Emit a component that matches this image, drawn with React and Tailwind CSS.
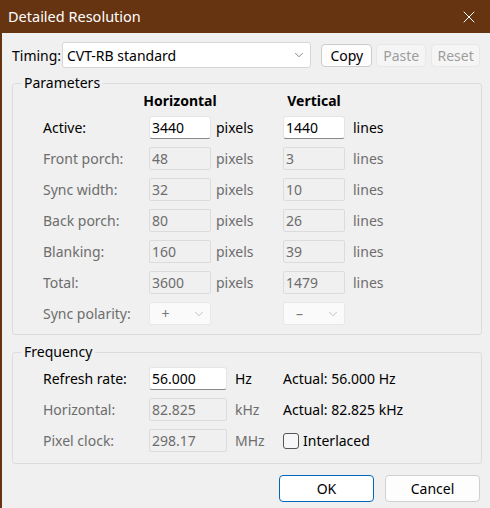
import { X, ChevronDown } from "lucide-react";

const font = { fontFamily: '"Noto Sans", "Open Sans", sans-serif' };

const Field = ({ value, enabled, w = "w-[62px]" }) => (
  <div
    className={`${w} h-[23px] flex items-center px-[2px] text-[14px] ${
      enabled
        ? "bg-white text-black border border-[#e5e5e5] border-b-[#8a8a8a] rounded-[3px]"
        : "bg-[#f0f0f0] text-[#6d6d6d] border border-[#dcdcdc] rounded-[2px]"
    }`}
  >
    {value}
  </div>
);

const ParamRow = ({ label, h, v, enabled }) => (
  <div className="flex items-center h-[31px]">
    <div className={`w-[106px] ${enabled ? "text-black" : "text-[#6d6d6d]"}`}>{label}</div>
    <Field value={h} enabled={enabled} />
    <div className={`w-[72px] pl-[5px] ${enabled ? "text-black" : "text-[#6d6d6d]"}`}>pixels</div>
    <Field value={v} enabled={enabled} />
    <div className={`pl-[8px] ${enabled ? "text-black" : "text-[#6d6d6d]"}`}>lines</div>
  </div>
);

const Polarity = ({ sign }) => (
  <div className="w-[62px] h-[23px] bg-[#fafafa] border border-[#e8e8e8] rounded-[2px] flex items-center justify-between pl-[8px] pr-[4px] text-[#777]">
    <span className="w-[15px] text-center">{sign}</span>
    <ChevronDown size={14} strokeWidth={1} className="text-[#999]" />
  </div>
);

export default function App() {
  return (
    <div style={font} className="w-[490px] h-[508px] bg-[#f0f0f0] border-l-2 border-[#673411] text-[14px] text-black flex flex-col overflow-hidden">
      <div className="h-[33px] bg-[#673411] text-white flex items-center justify-between pl-[6px] pr-[11px] shrink-0">
        <span className="text-[14.5px]">Detailed Resolution</span>
        <X size={20} strokeWidth={1.2} />
      </div>

      <div className="px-[10px]">
        <div className="flex items-center mt-[9px] h-[26px]">
          <span className="w-[50px]">Timing:</span>
          <div className="w-[250px] h-[26px] bg-white border border-[#d6d6d6] rounded-[3px] flex items-center justify-between pl-[4px] pr-[4px]">
            <span>CVT-RB standard</span>
            <ChevronDown size={14} strokeWidth={1.2} className="text-[#555]" />
          </div>
          <div className="ml-[10px] w-[51px] h-[23px] bg-[#fdfdfd] border border-[#cccccc] rounded-[4px] flex items-center justify-center">Copy</div>
          <div className="ml-[4px] w-[50px] h-[23px] bg-[#f5f5f5] border border-[#e8e8e8] rounded-[4px] flex items-center justify-center text-[#9d9d9d]">Paste</div>
          <div className="ml-[5px] w-[49px] h-[23px] bg-[#f5f5f5] border border-[#e8e8e8] rounded-[4px] flex items-center justify-center text-[#9d9d9d]">Reset</div>
        </div>

        <fieldset className="mt-[5px] w-[470px] h-[262px] border border-[#dcdcdc] rounded-[3px] px-0 pb-0">
          <legend className="ml-[8px] px-[3px] leading-[20px]">Parameters</legend>
          <div className="pl-[30px] -mt-[3px]">
            <div className="flex items-center h-[20px] font-bold">
              <div className="w-[106px]" />
              <div className="w-[62px] flex justify-center whitespace-nowrap">Horizontal</div>
              <div className="w-[72px]" />
              <div className="w-[62px] flex justify-center whitespace-nowrap">Vertical</div>
            </div>
            <div className="mt-[2px]">
              <ParamRow label="Active:" h="3440" v="1440" enabled />
              <ParamRow label="Front porch:" h="48" v="3" />
              <ParamRow label="Sync width:" h="32" v="10" />
              <ParamRow label="Back porch:" h="80" v="26" />
              <ParamRow label="Blanking:" h="160" v="39" />
              <ParamRow label="Total:" h="3600" v="1479" />
              <div className="flex items-center h-[31px]">
                <div className="w-[106px] text-[#6d6d6d]">Sync polarity:</div>
                <Polarity sign="+" />
                <div className="w-[72px]" />
                <Polarity sign="–" />
              </div>
            </div>
          </div>
        </fieldset>

        <fieldset className="mt-[7px] w-[470px] h-[122px] border border-[#dcdcdc] rounded-[3px] px-0 pb-0">
          <legend className="ml-[8px] px-[3px] leading-[20px]">Frequency</legend>
          <div className="pl-[30px] mt-[1px]">
            <div className="flex items-center h-[31px]">
              <div className="w-[106px]">Refresh rate:</div>
              <Field value="56.000" enabled w="w-[78px]" />
              <div className="w-[56px] pl-[8px]">Hz</div>
              <div>Actual: 56.000 Hz</div>
            </div>
            <div className="flex items-center h-[31px]">
              <div className="w-[106px] text-[#6d6d6d]">Horizontal:</div>
              <Field value="82.825" w="w-[78px]" />
              <div className="w-[56px] pl-[8px] text-[#6d6d6d]">kHz</div>
              <div>Actual: 82.825 kHz</div>
            </div>
            <div className="flex items-center h-[31px]">
              <div className="w-[106px] text-[#6d6d6d]">Pixel clock:</div>
              <Field value="298.17" w="w-[78px]" />
              <div className="w-[56px] pl-[8px] text-[#6d6d6d]">MHz</div>
              <div className="flex items-center">
                <div className="w-[16px] h-[16px] border border-[#555] rounded-[3px] bg-[#f7f7f7]" />
                <span className="ml-[4px]">Interlaced</span>
              </div>
            </div>
          </div>
        </fieldset>

        <div className="flex justify-end gap-[11px] mt-[11px]">
          <div className="w-[95px] h-[27px] bg-white border border-[#0067c0] rounded-[4px] flex items-center justify-center">OK</div>
          <div className="w-[95px] h-[27px] bg-[#fdfdfd] border border-[#d0d0d0] rounded-[4px] flex items-center justify-center">Cancel</div>
        </div>
      </div>
    </div>
  );
}
